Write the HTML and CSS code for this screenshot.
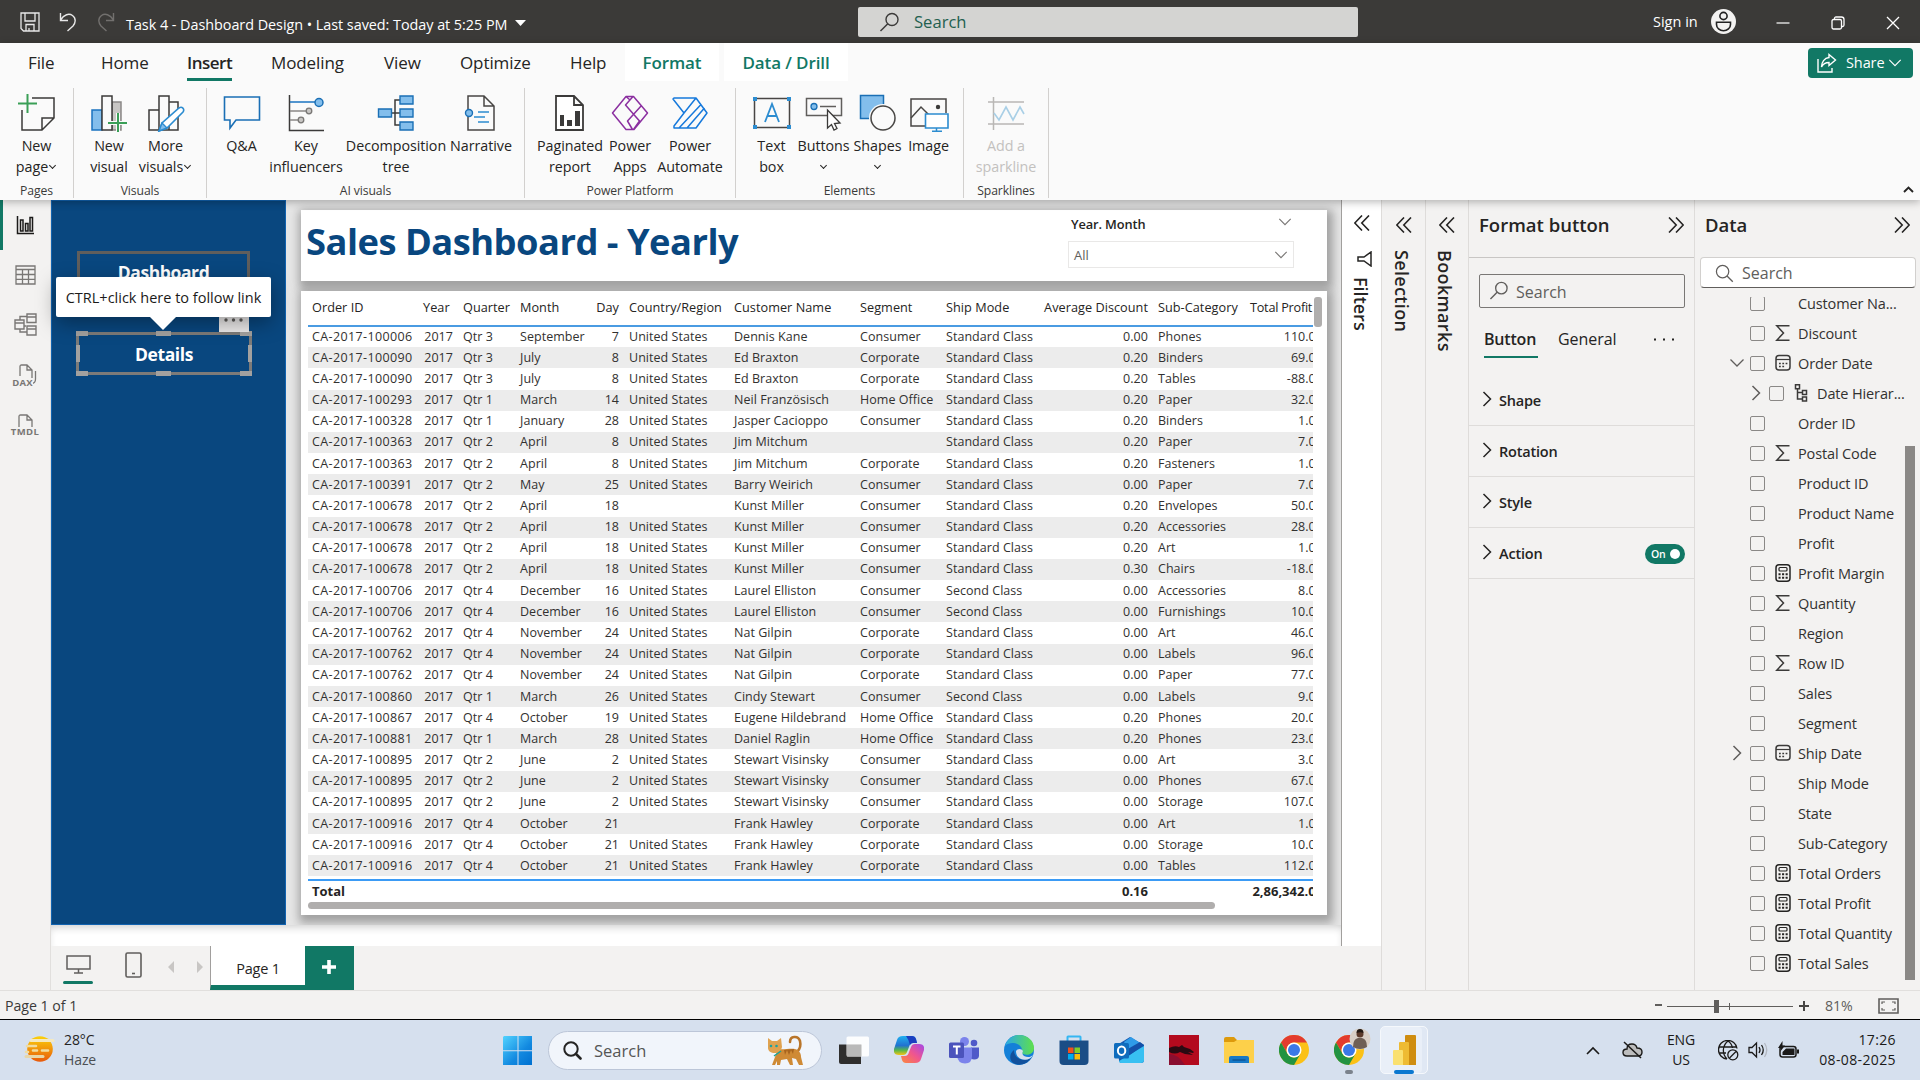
FILE: index.html
```html
<!DOCTYPE html>
<html lang="en">
<head>
<meta charset="utf-8">
<title>Task 4 - Dashboard Design</title>
<link rel="stylesheet" href="styles.css">
</head>
<body>
<svg class="defs" width="0" height="0">
  <symbol id="i-down" viewBox="0 0 16 16"><path d="M1.500 4.500 8 11l6.500-6.500" fill="none" stroke="currentColor" stroke-width="1.300"/></symbol>
  <symbol id="i-right" viewBox="0 0 10 16"><path d="M1.500 1 8.500 8l-7 7" fill="none" stroke="currentColor" stroke-width="1.500"/></symbol>
  <symbol id="i-dbl-left" viewBox="0 0 16 16"><path d="M8 .5.8 8 8 15.500M15 .5 7.800 8l7.200 7.500" fill="none" stroke="currentColor" stroke-width="1.600"/></symbol>
  <symbol id="i-dbl-right" viewBox="0 0 16 16"><path d="M8 .5 15.200 8 8 15.500M1 .5 8.200 8 1 15.500" fill="none" stroke="currentColor" stroke-width="1.600"/></symbol>
  <symbol id="i-lens" viewBox="0 0 20 20"><circle cx="12.500" cy="7.500" r="6" fill="none" stroke="currentColor" stroke-width="1.400"/><path d="m8.300 11.700-7.300 7.300" stroke="currentColor" stroke-width="1.500"/></symbol>
  <symbol id="i-lens-r" viewBox="0 0 20 20"><circle cx="8" cy="8" r="6.500" fill="none" stroke="currentColor" stroke-width="1.300"/><path d="m12.700 12.700 6 6" stroke="currentColor" stroke-width="1.400"/></symbol>
  <symbol id="i-sigma" viewBox="0 0 16 18"><path d="M14.500 1.800H1.800L8.500 9l-6.700 7.200h12.700" fill="none" stroke="#3b3a39" stroke-width="1.500"/></symbol>
  <symbol id="i-cal" viewBox="0 0 16 18"><rect x="1" y="1.500" width="14" height="14.500" rx="3" fill="none" stroke="#3b3a39" stroke-width="1.500"/><path d="M1 5.500h14" stroke="#3b3a39" stroke-width="1.200"/><path d="M4 9.500h9M4 12.500h6" stroke="#3b3a39" stroke-width="1.600" stroke-dasharray="1.800 1.500"/></symbol>
  <symbol id="i-calc" viewBox="0 0 16 18"><rect x="1" y=".8" width="14" height="16.400" rx="3" fill="none" stroke="#252423" stroke-width="1.500"/><rect x="4" y="3.500" width="8" height="3.500" rx="1" fill="none" stroke="#252423" stroke-width="1.200"/><path d="M3.500 10.300h10M3.500 13.800h10" stroke="#252423" stroke-width="2.100" stroke-dasharray="2.100 1.450"/></symbol>
  <symbol id="i-hier" viewBox="0 0 16 18"><path d="M1.500.8h4v4h-4zM8.500 6.500h4v4h-4zM8.500 13h4v4h-4zM3.500 4.800V15h5M3.500 8.500h5" fill="none" stroke="#3b3a39" stroke-width="1.500"/></symbol>
  <symbol id="i-chrome" viewBox="0 0 30 30"><circle cx="15" cy="15" r="15" fill="#fbc116"/><path d="M2 7.500A15 15 0 0 1 28 7.500H15A7.500 7.500 0 0 0 8.500 18.700z" fill="#e33b2e"/><path d="M2 7.500A15 15 0 0 0 15 30l6.500-11.200A7.500 7.500 0 0 1 8.500 18.700z" fill="#229342"/><circle cx="15" cy="15" r="7.500" fill="#fff"/><circle cx="15" cy="15" r="6" fill="#3b78e7"/></symbol>
</svg>

<header class="titlebar">
  <div class="quick">
    <svg width="20" height="20" viewBox="0 0 20 20" fill="none" stroke="#e8e8e8" stroke-width="1.300"><path d="M1 1h18v18H3.500L1 16.500zM5 1v8h10V1M6 19v-6.500h8V19M9 19v-3"/></svg>
    <svg width="18" height="20" viewBox="0 0 18 20" fill="none" stroke="#e8e8e8" stroke-width="1.400"><path d="M1.500 1v7.500H9M1.500 8C5 2.500 10 1 13.500 3.500c4 3 3 7.500.5 10.500l-5.500 5"/></svg>
    <svg width="18" height="20" viewBox="0 0 18 20" fill="none" stroke="#72706e" stroke-width="1.400"><path d="M16.500 1v7.500H9M16.500 8C13 2.500 8 1 4.500 3.500c-4 3-3 7.500-.5 10.500l5.500 5"/></svg>
  </div>
  <div class="doc-title">Task 4 - Dashboard Design • Last saved: Today at 5:25 PM</div>
  <svg class="doc-caret" width="11" height="6" viewBox="0 0 11 6"><path d="M0 0h11L5.500 6z" fill="#fff"/></svg>
  <div class="top-search"><svg width="21" height="20"><use href="#i-lens"/></svg><span>Search</span></div>
  <div class="account">
    <span>Sign in</span>
    <svg width="25" height="25" viewBox="0 0 25 25"><circle cx="12.500" cy="12.500" r="12.500" fill="#f3f2f1"/><circle cx="12.500" cy="7" r="3.600" fill="none" stroke="#222" stroke-width="1.600"/><path d="M5.500 13.200h14v2.300a7 6.300 0 0 1-14 0z" fill="none" stroke="#222" stroke-width="1.600"/></svg>
  </div>
  <div class="win">
    <svg width="14" height="14" viewBox="0 0 14 14"><path d="M.5 7h13" stroke="#fff" stroke-width="1.200"/></svg>
    <svg width="14" height="14" viewBox="0 0 14 14" fill="none" stroke="#fff" stroke-width="1.300"><rect x="1" y="3.500" width="9.500" height="9.500" rx="1.500"/><path d="M3.500 3.200V2.500c0-1 .6-1.500 1.500-1.500h5.500C12 1 13 2 13 3.500V9c0 1-.5 1.500-1.500 1.500h-.8"/></svg>
    <svg width="14" height="14" viewBox="0 0 14 14"><path d="m1 1 12 12M13 1 1 13" stroke="#fff" stroke-width="1.300"/></svg>
  </div>
</header>

<section class="ribbon">
  <nav class="tabs">
    <a class="t-file">File</a><a class="t-home">Home</a><a class="t-insert active">Insert</a><a class="t-model">Modeling</a><a class="t-view">View</a><a class="t-opt">Optimize</a><a class="t-help">Help</a><a class="ctx ctx-format">Format</a><a class="ctx ctx-data">Data / Drill</a>
    <div class="share">
      <svg width="20" height="20" viewBox="0 0 20 20" fill="none" stroke="#fff" stroke-width="1.400"><path d="M1 6v13h14v-4M12 1.500 18.500 7 12 12.500v-3C8 9.500 6 11 4.500 14 4.500 9 7.500 5 12 4.500z"/></svg>
      <span>Share</span><svg width="14" height="14"><use href="#i-down"/></svg>
    </div>
  </nav>
  <div class="groups">
    <div class="group g-pages">
      <div class="tools">
        <div class="tool w72"><svg width="38" height="38" viewBox="0 0 38 38" fill="none"><path d="M14 4h22v20L24 36H4V16M24 36V24h12" stroke="#3b3a39" stroke-width="1.500"/><path d="M9.500 0v19M0 9.500h19" stroke="#3a9f57" stroke-width="2"/></svg><b>New<br>page<i class="cv"></i></b></div>
      </div><span class="gname">Pages</span>
    </div>
    <div class="group g-visuals">
      <div class="tools">
        <div class="tool w56"><svg width="38" height="38" viewBox="0 0 38 38"><path d="M2 16h10v20H2z" fill="#83beec" stroke="#1a73c0" stroke-width="1.500"/><path d="M22 8h9v28h-9z" fill="#c8c6c4" stroke="#8a8886" stroke-width="1.500"/><path d="M12 2h10v34H12z" fill="#fafafa" stroke="#3b3a39" stroke-width="1.500"/><path d="M28 19v19M18 29h19" stroke="#fafafa" stroke-width="4"/><path d="M28 19v19M18 29h19" stroke="#3a9f57" stroke-width="2"/></svg><b>New<br>visual</b></div>
        <div class="tool w58"><svg width="38" height="38" viewBox="0 0 38 38"><path d="M2 16h10v20H2zM22 8h9v28h-9zM12 2h10v34H12z" fill="#fafafa" stroke="#3b3a39" stroke-width="1.500"/><path d="m12 37 3-8 17-15c3-2 6 1 4 4L20 34z" fill="#fff" stroke="#2c8cd0" stroke-width="1.600"/><path d="m12 37 3-8 5 5z" fill="#83beec" stroke="#2c8cd0" stroke-width="1.400"/></svg><b>More<br>visuals<i class="cv"></i></b></div>
      </div><span class="gname">Visuals</span>
    </div>
    <div class="group g-ai">
      <div class="tools">
        <div class="tool w56"><svg width="38" height="38" viewBox="0 0 38 38" fill="none"><path d="M1.500 3h35v23H13l-6 8v-8H1.500z" stroke="#1a6fb5" stroke-width="1.600"/></svg><b>Q&amp;A</b></div>
        <div class="tool w72"><svg width="38" height="38" viewBox="0 0 38 38"><path d="M2.500 1v35.500H37" fill="none" stroke="#3b3a39" stroke-width="1.500"/><path d="M3 8h26" stroke="#1a73c0" stroke-width="1.500"/><path d="M3 17h16M3 26h8" stroke="#8a8886" stroke-width="1.500"/><circle cx="32" cy="8.500" r="4" fill="#83beec" stroke="#1a6fb5" stroke-width="1.500"/><circle cx="22" cy="17" r="2.800" fill="#c8c6c4" stroke="#797775" stroke-width="1.300"/><circle cx="14" cy="26" r="2.800" fill="#c8c6c4" stroke="#797775" stroke-width="1.300"/></svg><b>Key<br>influencers</b></div>
        <div class="tool w108"><svg width="38" height="38" viewBox="0 0 38 38"><path d="M14 19h9M23 6h-5v25h5" fill="none" stroke="#3b3a39" stroke-width="1.500"/><path d="M1.500 15h13v8h-13zM23 2h13v8H23zM23 15h13v8H23zM23 28h13v8H23z" fill="#83beec" stroke="#1a6fb5" stroke-width="1.400"/></svg><b>Decomposition<br>tree</b></div>
        <div class="tool w62"><svg width="38" height="38" viewBox="0 0 38 38" fill="none"><path d="M6 16V2h16l10 10v24H6V23M22 2v10h10" stroke="#484644" stroke-width="1.500"/><circle cx="7" cy="19" r="3.500" fill="#83beec" stroke="#1a6fb5" stroke-width="1.400"/><path d="M16 18h11M12 23h11M16 28h11" stroke="#2c8cd0" stroke-width="1.400"/></svg><b>Narrative</b></div>
      </div><span class="gname">AI visuals</span>
    </div>
    <div class="group g-power">
      <div class="tools">
        <div class="tool w66"><svg width="38" height="38" viewBox="0 0 38 38"><path d="M5 2h18l9 9v25H5zM23 2v9h9" fill="#fff" stroke="#3b3a39" stroke-width="1.800"/><path d="M9 21h4v11H9zM16 26h5v6h-5zM24 17h5v15h-5z" fill="#3b3a39"/></svg><b>Paginated<br>report</b></div>
        <div class="tool w54"><svg width="38" height="38" viewBox="0 0 38 38" fill="none" stroke="#8b2fa0" stroke-width="1.500" stroke-linejoin="round"><path d="M15 2.500h7.500L36.500 19 23 35.500h-8L1.500 19zM22 2.500 14.500 11l14 16-6 8.500M30.500 11.500l-14 15.500 5 8.500M15 2.500l4 3.500"/></svg><b>Power<br>Apps</b></div>
        <div class="tool w66"><svg width="38" height="38" viewBox="0 0 38 38" fill="none" stroke="#1679dc" stroke-width="1.500" stroke-linejoin="round"><path d="M3 4h22l11 15-11 15H3l0-2 10-13L2 5zM13 19 25 4M8 34 30 10.500M16 34 33.500 14"/></svg><b>Power<br>Automate</b></div>
      </div><span class="gname">Power Platform</span>
    </div>
    <div class="group g-elem">
      <div class="tools">
        <div class="tool w51"><svg width="40" height="38" viewBox="0 0 40 38"><path d="M2.500 4.500h35v29h-35z" fill="none" stroke="#484644" stroke-width="1.500"/><path d="M1 3h4v4H1zM35 3h4v4h-4zM1 31h4v4H1zM35 31h4v4h-4z" fill="#2c8cd0"/><path d="m13 28 7-18 7 18M15.500 22h9" fill="none" stroke="#2c8cd0" stroke-width="1.800"/></svg><b>Text<br>box</b></div>
        <div class="tool w54"><svg width="38" height="38" viewBox="0 0 38 38"><path d="M1.500 4.500h35v17h-35z" fill="none" stroke="#605e5c" stroke-width="1.500"/><circle cx="9" cy="12.500" r="3" fill="#83beec" stroke="#1a6fb5" stroke-width="1.300"/><path d="M15 12.500h16" stroke="#605e5c" stroke-width="1.500"/><path d="m22.500 16 12.500 13-5.500.5 2.500 5-3 1.500-2.500-5.500-4 3.500z" fill="#fff" stroke="#3b3a39" stroke-width="1.300"/></svg><b>Buttons<br><i class="cv"></i></b></div>
        <div class="tool w54"><svg width="38" height="38" viewBox="0 0 38 38"><path d="M1.500 1.500h23v23h-23z" fill="#83beec" stroke="#1a6fb5" stroke-width="1.500"/><circle cx="24" cy="24" r="14" fill="#fafafa"/><circle cx="24" cy="24" r="12" fill="#fafafa" stroke="#484644" stroke-width="1.500"/></svg><b>Shapes<br><i class="cv"></i></b></div>
        <div class="tool w50"><svg width="40" height="38" viewBox="0 0 40 38" fill="none"><path d="M16 32H2V5h35v14" stroke="#484644" stroke-width="1.500"/><path d="m2 24 10-11 8 8" stroke="#484644" stroke-width="1.500"/><circle cx="29" cy="13" r="2.200" fill="#3b3a39"/><path d="M16.500 20h22.500v14H16.500z" fill="#fff" stroke="#2c8cd0" stroke-width="1.600"/><path d="M27.500 34v3M23 37.300h10" stroke="#2c8cd0" stroke-width="1.500"/></svg><b>Image</b></div>
      </div><span class="gname">Elements</span>
    </div>
    <div class="group g-spark">
      <div class="tools">
        <div class="tool off"><svg width="38" height="38" viewBox="0 0 38 38" fill="none"><path d="M1 8h36M1 30h36M6.500 3v33" stroke="#b9b7b5" stroke-width="1.500"/><path d="m7 19 5 7 7-13 7 13 7-13 4 7" stroke="#a9cfe6" stroke-width="1.600"/></svg><b>Add a<br>sparkline</b></div>
      </div><span class="gname">Sparklines</span>
    </div>
    <svg class="collapse" width="11" height="7" viewBox="0 0 11 7"><path d="m1 6 4.500-4.500L10 6" fill="none" stroke="#252423" stroke-width="1.900"/></svg>
  </div>
</section>

<main class="work">
  <aside class="rail">
    <div class="rail-item on"><svg width="19" height="19" viewBox="0 0 19 19" fill="none" stroke="#1b1a19" stroke-width="1.500"><path d="M1.500 0v17.500H18M4.500 4h2.500v11H4.500zM9.500 7.500H12V15H9.500zM14 1.500h2.500V15H14z"/></svg></div>
    <div class="rail-item"><svg width="21" height="20" viewBox="0 0 21 20" fill="none" stroke="#797775" stroke-width="1.300"><path d="M1 1h19v18H1zM1 4.500h19M1 9.500h19M1 14.300h19M7.500 4.500V19M13.500 4.500V19"/></svg></div>
    <div class="rail-item"><svg width="23" height="23" viewBox="0 0 23 23" fill="none" stroke="#797775" stroke-width="1.400"><path d="M1 7h9v9H1zM1 10h9M13 1h9v8.500h-9zM13 4h9M13 13h9v9h-9zM13 16h9M6 7V3.500h7M10 13h2M6 16v3h7"/></svg></div>
    <div class="rail-item doc"><svg width="23" height="21" viewBox="0 0 23 21" fill="none" stroke="#797775" stroke-width="1.300"><path d="M6 12V2.500C6 1.500 6.500 1 7.500 1H13l5 5v9c0 2-1 2.500-2 2.500M13 1v5h5M21.500 7v8c0 3-1.500 4.500-4 4.500"/></svg><em>DAX</em></div>
    <div class="rail-item doc tmdl"><svg width="23" height="13" viewBox="0 0 23 13" fill="none" stroke="#797775" stroke-width="1.300"><path d="M5 13V2.500C5 1.500 5.500 1 6.500 1H13l5 5v7M13 1v5h5"/></svg><em>TMDL</em></div>
  </aside>

  <div class="center">
    <div class="canvas">
      <div class="navy">
        <div class="nav-btn">Dashboard</div>
        <div class="nav-btn selected">Details
          <span class="h tl"></span><span class="h tc"></span><span class="h tr"></span><span class="h ml"></span><span class="h mr"></span><span class="h bl"></span><span class="h bc"></span><span class="h br"></span>
        </div>
        <div class="more"><svg width="20" height="4" viewBox="0 0 20 4" fill="#605e5c"><circle cx="2" cy="2" r="1.700"/><circle cx="9.500" cy="2" r="1.700"/><circle cx="17" cy="2" r="1.700"/></svg></div>
        <div class="tip">CTRL+click here to follow link</div>
      </div>
      <div class="report">
        <div class="card head">
          <h1>Sales Dashboard - Yearly</h1>
          <div class="slicer">
            <div class="slicer-top"><span>Year. Month</span><svg width="14" height="14"><use href="#i-down"/></svg></div>
            <div class="slicer-box"><span>All</span><svg width="14" height="14"><use href="#i-down"/></svg></div>
          </div>
        </div>
        <div class="card grid-card">
          <div class="tbl-clip"><table class="tbl">
            <colgroup><col class="c1"><col class="c2"><col class="c3"><col class="c4"><col class="c5"><col class="c6"><col class="c7"><col class="c8"><col class="c9"><col class="c10"><col class="c11"><col class="c12"></colgroup>
            <thead><tr><th>Order ID</th><th>Year</th><th>Quarter</th><th>Month</th><th class="n">Day</th><th>Country/Region</th><th>Customer Name</th><th>Segment</th><th>Ship Mode</th><th class="n">Average Discount</th><th>Sub-Category</th><th>Total Profit</th></tr></thead>
            <tbody id="rows"></tbody>
          </table>
          <div class="total"><span class="tot-l">Total</span><span class="tot-d">0.16</span><span class="tot-p">2,86,342.00</span></div>
          </div>
          <div class="vbar"></div>
          <div class="hbar"></div>
        </div>
      </div>
    </div>
    <div class="under"></div>
    <footer class="pages">
      <div class="view on"><svg width="25" height="19" viewBox="0 0 25 19" fill="none" stroke="#605e5c" stroke-width="1.500"><path d="M1 1h23v13H1zM12.500 14v4M8 18h9"/></svg></div>
      <div class="view phone"><svg width="17" height="26" viewBox="0 0 17 26" fill="none" stroke="#605e5c" stroke-width="1.600"><rect x="1" y="1" width="15" height="24" rx="1.500"/><path d="M7 21.500h3"/></svg></div>
      <svg class="arr" width="35" height="12" viewBox="0 0 35 12" fill="#c8c6c4"><path d="M6 0v12L0 6zM29 0v12l6-6z"/></svg>
      <div class="page-tab">Page 1</div>
      <div class="add"><svg width="14" height="14" viewBox="0 0 14 14"><path d="M7 0v14M0 7h14" stroke="#fff" stroke-width="3.600"/></svg></div>
    </footer>
  </div>

  <div class="strip filters"><svg width="16" height="16"><use href="#i-dbl-left"/></svg>
    <svg class="funnel" width="15" height="16" viewBox="0 0 15 16" fill="none" stroke="#252423" stroke-width="1.500"><path d="M14 1v14L7 10H1V6h6z"/></svg><span>Filters</span></div>
  <div class="strip"><svg width="16" height="16"><use href="#i-dbl-left"/></svg><span>Selection</span></div>
  <div class="strip marks"><svg width="16" height="16"><use href="#i-dbl-left"/></svg><span>Bookmarks</span></div>

  <section class="pane format">
    <div class="pane-head"><h2>Format button</h2><svg width="16" height="16"><use href="#i-dbl-right"/></svg></div>
    <div class="fsearch"><svg width="20" height="19"><use href="#i-lens"/></svg><span>Search</span></div>
    <div class="ftabs"><span class="on">Button</span><span>General</span><svg width="20" height="3" viewBox="0 0 20 3" fill="#252423"><path d="M0 .5h2v2H0zM9 .5h2v2H9zM18 .5h2v2h-2z"/></svg></div>
    <div class="fitem"><svg width="10" height="16"><use href="#i-right"/></svg><span>Shape</span></div>
    <div class="fitem"><svg width="10" height="16"><use href="#i-right"/></svg><span>Rotation</span></div>
    <div class="fitem"><svg width="10" height="16"><use href="#i-right"/></svg><span>Style</span></div>
    <div class="fitem"><svg width="10" height="16"><use href="#i-right"/></svg><span>Action</span><div class="toggle">On<i></i></div></div>
  </section>

  <section class="pane data">
    <div class="pane-head"><h2>Data</h2><svg width="16" height="16"><use href="#i-dbl-right"/></svg></div>
    <div class="dsearch"><svg width="19" height="19"><use href="#i-lens-r"/></svg><span>Search</span></div>
    <div class="fields" id="fields"></div>
    <div class="dbar"></div>
  </section>
</main>

<div class="status">
  <span>Page 1 of 1</span>
  <div class="zoom">
    <svg width="154" height="16" viewBox="0 0 154 16"><path d="M0 7h7" stroke="#605e5c" stroke-width="2"/><path d="M12 8.500h126M74.500 5v7" stroke="#605e5c"/><path d="M59 2h5v13h-5z" fill="#605e5c"/><path d="M144 8h10M149 3v10" stroke="#484644" stroke-width="2"/></svg>
    <span>81%</span>
    <svg class="fit" width="21" height="16" viewBox="0 0 21 16" fill="none" stroke="#605e5c" stroke-width="1.600"><path d="M1 1h19v14H1z"/><path d="M4 6V4h3M14 4h3v2M17 10v2h-3M7 12H4v-2" stroke-width="1.200"/></svg>
  </div>
</div>

<div class="taskbar">
  <div class="weather">
    <svg width="31" height="28" viewBox="0 0 31 28"><defs><linearGradient id="sun" x1="0" y1="0" x2="0" y2="1"><stop offset="0" stop-color="#fbd20b"/><stop offset="1" stop-color="#e8590c"/></linearGradient></defs><circle cx="16" cy="14" r="12.800" fill="url(#sun)"/><path d="M7 5.500h11M17 5.500h12" stroke="#f5e9c0" stroke-width="3" stroke-linecap="round"/><path d="M3 11h9M18 15.500h6M9 15.500h4M2 17h2" stroke="#f0dca0" stroke-width="2.600" stroke-linecap="round"/><path d="M2 21.500h17" stroke="#e8d6a8" stroke-width="3" stroke-linecap="round"/></svg>
    <div>28°C<br><small>Haze</small></div>
  </div>
  <div class="apps">
    <svg class="start" width="30" height="30" viewBox="0 0 30 30"><defs><linearGradient id="w" x1="0" y1="0" x2="1" y2="1"><stop offset="0" stop-color="#52d3ff"/><stop offset=".6" stop-color="#1289e0"/><stop offset="1" stop-color="#0070d0"/></linearGradient></defs><path d="M1 0h13.500v14.300H0V1zM15.500 0H29v14.300H15.500zM0 15.300h14.500V29H0zM15.500 15.300H29V29H15.500z" fill="url(#w)"/></svg>
    <div class="tsearch"><svg width="19" height="19" viewBox="0 0 19 19"><circle cx="8" cy="8" r="6.700" fill="none" stroke="#252423" stroke-width="2"/><path d="m13 13 4.500 4.500" stroke="#252423" stroke-width="2.600" stroke-linecap="round"/></svg><span>Search</span>
      <svg class="cat" width="38" height="32" viewBox="0 0 38 32"><path d="M31 17c3-3 4-7 3-11-2-6-10-5-10 1" fill="none" stroke="#b9752a" stroke-width="2.600" stroke-linecap="round"/><path d="M12 14c6 1 12-1 17 0 4 1 6 4 6 8l2 8h-4l-3-6-4-1 1 7h-3l-3-6-6 1-1 5h-3v-4l-2 4H6l3-8z" fill="#cf8a35"/><path d="m18 15 1 5 2-5 2 5 2-5 2 4 1-5z" fill="#a8641e"/><path d="m2 3 4 3h5l4-3 1 9c-1 4-4 6-7 6-4 0-7-2-7-5z" fill="#e0a250"/><circle cx="5" cy="11" r="1.300" fill="#1aa3a3"/><circle cx="10.500" cy="11" r="1.300" fill="#1aa3a3"/><path d="m8 21 7-5" stroke="#17a398" stroke-width="1.500"/></svg>
    </div>
    <svg class="app" width="30" height="30" viewBox="0 0 30 30"><path d="M0 9.500h22V29H2q-2 0-2-2z" fill="#2f2e2d"/><rect x="7.500" y="1.500" width="22.500" height="20" rx="1.500" fill="#fff" opacity=".92"/><path d="M8 9.500h14.500v12H8z" fill="#b9b9b9"/></svg>
    <svg class="app" width="30" height="30" viewBox="0 0 30 30"><defs><linearGradient id="cp1" x1="0" y1="0" x2="0" y2="1"><stop offset="0" stop-color="#1fb0f0"/><stop offset=".5" stop-color="#2272d0"/><stop offset=".75" stop-color="#57b84a"/><stop offset="1" stop-color="#f5c414"/></linearGradient><linearGradient id="cp2" x1="1" y1="0" x2="0" y2="1"><stop offset="0" stop-color="#a348e8"/><stop offset=".5" stop-color="#f0568e"/><stop offset="1" stop-color="#fb8a3c"/></linearGradient></defs><path d="M9 1h9q3 0 4 3l1 4h-4q-3 0-4 4l-2 5q-1 3-4 3H5q-6 0-5-6l3-9q1-4 6-4z" fill="url(#cp1)"/><path d="M16 1h2q3 0 4 3l1 4h-4q-2 0-3 2-1-5-4-9z" fill="#1b3fc0"/><path d="M21 28h-9q-3 0-4-3l-1-4h4q3 0 4-4l2-5q1-3 4-3h4q6 0 5 6l-3 9q-1 4-6 4z" fill="url(#cp2)"/></svg>
    <svg class="app" width="30" height="30" viewBox="0 0 30 30"><circle cx="15.500" cy="6.500" r="4.500" fill="#7b83eb"/><circle cx="25" cy="8" r="3.300" fill="#5059c9"/><path d="M22 12.500h8v8q0 4-5 4-3 0-4-2z" fill="#5059c9"/><path d="M8 12.500h15V21q0 7.500-7 7.500T8 21z" fill="#7b83eb"/><rect y="7.500" width="15" height="15.500" rx="1.500" fill="#4b53bc"/><path d="M4 11.500h7.500M7.800 11.500v8" stroke="#fff" stroke-width="2"/></svg>
    <svg class="app" width="30" height="30" viewBox="0 0 30 30"><defs><linearGradient id="e1" x1="0" x2="1"><stop offset="0" stop-color="#2aa8e8"/><stop offset="1" stop-color="#5fe04a"/></linearGradient></defs><circle cx="15" cy="15" r="15" fill="#1480d8"/><path d="M1 11C3 4 9 0 15 0c9 0 15 6 15 13 0 6-6 8-11 6-2-1-1-2-1-4 0-6-11-10-17-4z" fill="url(#e1)"/><path d="M10 15c0 9 9 12 17 8-5 8-14 8-19 4-3-4-2-9 2-12z" fill="#12519c"/><path d="M12 16a4 4 0 0 1 7 0c-1 2-1 3 1 5 4 2 7 1 9-1-2 4-7 6-12 4-4-2-5-5-5-8z" fill="#d6e0ee"/></svg>
    <svg class="app" width="30" height="30" viewBox="0 0 30 30"><path d="M8.500 6V2q0-.5.500-.5h12q.5 0 .5.500v4" fill="none" stroke="#35b6f2" stroke-width="2"/><path d="M.5 5.500h29V26q0 4-4 4h-21q-4 0-4-4z" fill="#1a4d86"/><path d="M9 12.500h5.500V18H9z" fill="#f1511b"/><path d="M15.500 12.500H21V18h-5.500z" fill="#80cc28"/><path d="M9 19h5.500v5.500H9z" fill="#00adef"/><path d="M15.500 19H21v5.500h-5.500z" fill="#fbbc09"/></svg>
    <svg class="app" width="30" height="30" viewBox="0 0 30 30"><path d="m3 10 13-8 14 8v15q0 3-3 3H8q-3 0-3-3z" fill="#1459b0"/><path d="M10 7 17 2l9 6-11 8z" fill="#2f9be8"/><path d="m5 26 25-15v14q0 3-3 3H8q-3 0-3-2z" fill="#38c0f2"/><path d="m12 15 14-8 4 3-17 12z" fill="#1450a8"/><rect y="8" width="15" height="15.500" rx="1.500" fill="#0f6cbd"/><ellipse cx="7.600" cy="15.700" rx="3.700" ry="4.200" fill="none" stroke="#fff" stroke-width="2"/></svg>
    <svg class="app" width="30" height="30" viewBox="0 0 30 30"><path d="M0 0h30v30H0z" fill="#b30a1e"/><path d="M0 13q6-3 10-1l3-2 2 2 6 2 4 3-1 1-5-1 5 3-8-1-5-2q-5 3-11 0z" fill="#2a0a12"/><path d="M0 19q9 0 16 11H0z" fill="#8a0f30"/></svg>
    <svg class="app" width="30" height="30" viewBox="0 0 30 30"><path d="M0 4q0-2 2-2h8l3 3h17v8H0z" fill="#dd9a0c"/><path d="M0 7h10l3-2h17v23H0z" fill="#fdd04a"/><path d="M5 28v-5q0-2 2-2h16q2 0 2 2v5z" fill="#1779c6"/><path d="M8.500 25h13" stroke="#0c4f8e" stroke-width="1.300"/></svg>
    <svg class="app" width="30" height="30"><use href="#i-chrome"/></svg>
    <div class="app running"><svg width="30" height="30"><use href="#i-chrome"/></svg><svg class="avatar" width="22" height="22" viewBox="0 0 22 22"><circle cx="11" cy="11" r="10.500" fill="#d9cfc6"/><path d="M4 19q0-8 5-9h4q5 1 5 9-7 4-14 0z" fill="#6f5f55"/><circle cx="11" cy="6" r="3.500" fill="#5c3a2a"/><path d="M7.500 5q0-4 3.500-4t3.500 4q-3-1.500-7 0z" fill="#221812"/></svg></div>
    <div class="app current"><svg width="23" height="30" viewBox="0 0 23 30"><path d="M12 1q0-1 1-1h9q1 0 1 1v29H12z" fill="#cf8d10"/><path d="M6 8q0-1 1-1h8q1 0 1 1v22H6z" fill="#eebb33"/><path d="M0 16q0-1 1-1h8q1 0 1 1v14H1q-1 0-1-1z" fill="#fae070"/></svg></div>
  </div>
  <div class="tray">
    <svg width="14" height="9" viewBox="0 0 14 9"><path d="m1 8 6-6 6 6" fill="none" stroke="#1b1a19" stroke-width="1.600"/></svg>
    <svg class="cloud" width="21" height="18" viewBox="0 0 21 18"><path d="M5 15q-4 0-4-3.500T5 8q0-5 5-5 4 0 5 4 5 0 5 4t-4 4z" fill="#bdbdbd" stroke="#1b1a19" stroke-width="1.400"/><path d="m2 1 17 16" stroke="#1b1a19" stroke-width="1.500"/></svg>
    <div class="lang">ENG<br>US</div>
    <svg class="globe" width="21" height="21" viewBox="0 0 21 21" fill="none" stroke="#1b1a19" stroke-width="1.300"><path d="M19 8.500A9.300 9.300 0 1 0 9 19M10 1C4 6 4 14 9 19M10 1c3 2 4 4 4.500 7M1.500 7h17M1.500 13H8"/><circle cx="14.800" cy="14.800" r="5"/><path d="m11.500 18 6.500-6.500"/></svg>
    <svg class="spk" width="20" height="18" viewBox="0 0 20 18" fill="none" stroke="#1b1a19" stroke-width="1.300"><path d="M1 6.500h3L8.500 2v14L4 11.500H1zM11 6q2 3 0 6M13.500 4q3.500 5 0 10"/><path d="M16.500 2q4.500 7 0 14" stroke="#b4b9c2"/></svg>
    <svg class="bat" width="21" height="18" viewBox="0 0 21 18"><rect x="2" y="5.500" width="16" height="10.500" rx="2.500" fill="none" stroke="#1b1a19" stroke-width="1.500"/><path d="M8 7.500h8.500v6.500H4.500v-3zM19 8.500h2v4h-2zM4.500 0 0 7h3l-1 4 5-6.500H4.500z" fill="#1b1a19"/></svg>
    <div class="clock">17:26<br>08-08-2025</div>
  </div>
</div>
<script src="script.js"></script>
</body>
</html>
```
FILE: styles.css
```css
* { box-sizing: border-box; }
html, body { height: 100%; }
body {
  margin: 0;
  width: 1920px;
  height: 1080px;
  overflow: hidden;
  display: flex;
  flex-direction: column;
  font-family: "Open Sans", "Noto Sans", sans-serif;
  font-size: 14px;
  color: #252423;
  background: #f3f2f1;
}
.defs { position: absolute; }
svg { flex: none; display: block; }
h1, h2 { margin: 0; }

/* Title bar */
.titlebar { height: 43px; flex: none; background: #3b3a38; color: #fff; display: flex; align-items: center; }
.quick { display: flex; gap: 19px; padding-left: 20px; width: 126px; }
.quick svg + svg + svg { margin-left: 1px; }
.doc-title { font-size: 14.400px; white-space: nowrap; width: 382px; padding-top: 5px; letter-spacing: -.04px; }
.doc-caret { margin-left: 7px; margin-top: 2px; }
.top-search { margin-left: 332px; width: 500px; height: 30px; border-radius: 2px; background: #d4d4d2; display: flex; align-items: center; padding-left: 21px; color: #23604f; font-size: 16.600px; }
.top-search svg { color: #3b3a39; margin-right: 14px; }
.account { margin-left: 295px; display: flex; align-items: center; gap: 12px; font-size: 14.500px; }
.account span { width: 46px; white-space: nowrap; }
.win { display: flex; gap: 41px; margin-left: 40px; padding-top: 2px; }

/* Ribbon */
.ribbon { height: 157px; flex: none; background: #fafafa; display: flex; flex-direction: column; box-shadow: 0 2px 8px rgba(0,0,0,.28); position: relative; z-index: 3; }
.tabs { height: 38px; display: flex; padding-left: 28px; font-size: 17px; line-height: 40px; color: #252423; }
.tabs a { white-space: nowrap; letter-spacing: -.1px; }
.t-file { width: 73px; } .t-home { width: 86px; }
.t-insert { width: 45px; margin-right: 39px; }
.t-model { width: 113px; } .t-view { width: 76px; } .t-opt { width: 110px; } .t-help { width: 55px; }
.tabs .active { font-weight: 600; border-bottom: 3px solid #117865; letter-spacing: -.5px; }
.ctx { background: #fff; color: #117865; font-weight: 600; text-align: center; }
.ctx-format { width: 94px; margin-right: 5px; }
.ctx-data { width: 124px; }
.share { margin: 5px 7px 0 auto; width: 105px; height: 30px; border-radius: 4px; background: #117865; color: #fff; display: flex; align-items: center; padding-left: 9px; font-size: 14.500px; line-height: 30px; }
.share span { width: 38px; margin: 0 4px 0 9px; letter-spacing: -.1px; }
.groups { flex: 1; display: flex; padding: 7px 0 2px; }
.group { display: flex; flex-direction: column; border-right: 1px solid #d2d0ce; height: 110px; align-items: center; }
.g-pages { width: 74px; } .g-visuals { width: 133px; } .g-ai { width: 318px; } .g-power { width: 211px; } .g-elem { width: 228px; } .g-spark { width: 85px; }
.tools { display: flex; flex: none; padding-top: 6px; height: 94px; }
.tool { display: flex; flex-direction: column; align-items: center; gap: 4px; }
.tool b { font-weight: 400; font-size: 14.300px; line-height: 20.500px; text-align: center; white-space: nowrap; letter-spacing: -.05px; }
.off b { color: #c3c1bf; }
.cv { display: inline-block; width: 5px; height: 5px; border: solid #252423; border-width: 0 1.700px 1.700px 0; transform: rotate(45deg); margin: 0 2px 4px 4px; }
.tool b br + .cv { margin-left: 2px; }
.w50 { width: 48px; } .w51 { width: 50px; } .w54 { width: 54px; } .w56 { width: 57px; } .w58 { width: 56px; } .w62 { width: 62px; } .w66 { width: 66px; } .w72 { width: 72px; } .w108 { width: 108px; }
.g-visuals .tools { margin-right: 6px; }
.g-ai { align-items: stretch; text-align: center; }
.g-ai .tools { padding-left: 6px; }
.gname { flex: none; font-size: 12.200px; line-height: 18px; letter-spacing: -.1px; color: #3b3a39; }
.collapse { margin: 98px 6px 0 auto; }

/* Work area */
.work { flex: 1; display: flex; min-height: 0; border-bottom: 1px solid #e1dfdd; }
.rail { width: 51px; border-right: 1px solid #e1dfdd; background: #f3f2f1; display: flex; flex-direction: column; }
.rail-item { height: 50px; display: flex; align-items: center; justify-content: center; flex-direction: column; padding-bottom: 1px; }
.rail-item.on { border-left: 3px solid #117865; padding: 0 2px 0 0; }
.rail-item.doc { padding-bottom: 0; }
.doc em { font: 700 9.500px "Open Sans", sans-serif; color: #797775; margin: -7px 0 0 -5px; letter-spacing: .2px; background: #f3f2f1; line-height: 9px; }
.tmdl em { margin: 0; letter-spacing: .4px; }
.center { width: 1290px; display: flex; flex-direction: column; position: relative; }
.canvas { height: 725px; flex: none; display: flex; background: #e6e6e6; }
.navy { width: 235px; background: #09477f; border: 1px solid #1163b0; position: relative; display: flex; flex-direction: column; padding: 50px 0 0 24px; gap: 38px; }
.nav-btn { width: 173px; height: 43px; margin-left: 1px; border: 3px solid #605e5c; color: #fff; font-weight: 700; font-size: 17.500px; letter-spacing: -.4px; line-height: 37px; text-align: center; position: relative; }
.selected { width: 176px; margin-left: 0; border-color: #7d7b79; line-height: 38px; }
.h { position: absolute; background: #a3a19f; }
.tl, .tc, .tr { top: -4px; height: 5px; width: 12px; } .bl, .bc, .br { bottom: -4px; height: 5px; width: 12px; }
.tl, .bl { left: -3px; } .tr, .br { right: -3px; } .tc, .bc { left: 77px; width: 15px; }
.ml, .mr { top: 10px; height: 17px; width: 4px; } .ml { left: -3px; } .mr { right: -3px; }
.more { position: absolute; left: 167px; top: 106px; width: 30px; height: 25px; background: #eceaea; display: flex; align-items: center; justify-content: center; }
.tip { position: absolute; left: 4px; top: 76px; width: 215px; height: 40px; border-radius: 2px; background: #fff; color: #1b1a19; font-size: 14.500px; line-height: 41px; text-align: center; white-space: nowrap; box-shadow: 0 6px 20px rgba(0,0,0,.35); }
.tip::after { content: ""; position: absolute; left: 94px; top: 40px; border: 13px solid transparent; border-top-color: #fff; border-bottom: 0; }
.report { flex: 1; overflow: hidden; padding: 10px 0 0 15px; display: flex; flex-direction: column; gap: 10px; }
.card { width: 1026px; background: #fff; box-shadow: 2px 4px 9px 4px rgba(0,0,0,.3); }
.head { height: 71px; display: flex; justify-content: space-between; }
h1 { font-size: 36.300px; line-height: 62px; padding-left: 5px; color: #09477f; letter-spacing: -.5px; white-space: nowrap; }
.slicer { width: 226px; margin-right: 33px; }
.slicer svg { color: #797775; }
.slicer-top { display: flex; justify-content: space-between; padding: 5px 2px 0 3px; height: 31px; font-weight: 600; font-size: 12.800px; line-height: 19px; letter-spacing: -.1px; }
.slicer-box { height: 27px; border: 1px solid #e9e8e7; display: flex; justify-content: space-between; align-items: center; padding: 0 5px; font-size: 13px; color: #605e5c; }
.grid-card { height: 624px; position: relative; padding: 0 0 0 7px; z-index: 1; }
.tbl-clip { width: 1005px; height: 611px; overflow: hidden; }
.tbl { border-collapse: collapse; table-layout: fixed; width: 1020px; font-size: 12.500px; letter-spacing: .04px; color: #323130; }
.c1 { width: 110px; } .c2 { width: 40px; } .c3 { width: 57px; } .c4 { width: 76px; } .c5 { width: 33px; } .c6 { width: 105px; } .c7 { width: 126px; } .c8 { width: 86px; } .c9 { width: 97px; } .c10 { width: 115px; } .c11 { width: 93px; } .c12 { width: 82px; }
.tbl th { font-weight: 400; font-size: 12.700px; text-align: left; height: 35px; padding: 0 5px 2px; border-bottom: 2px solid #4a9be2; white-space: nowrap; color: #252423; }
.tbl th:last-child { letter-spacing: -.25px; padding-left: 4px; }
.tbl td { height: 21.180px; line-height: 18px; padding: 0 5px; white-space: nowrap; overflow: hidden; }
.tbl td:first-child { letter-spacing: .38px; }
.tbl th:first-child, .tbl td:first-child { padding-left: 4px; }
.tbl tr:nth-child(even) td { background: #ececec; }
.tbl .n { text-align: right; }
.total { margin-top: 3px; width: 1020px; border-top: 2px solid #3b9bf5; height: 22px; display: flex; font-weight: 700; font-size: 13px; line-height: 21px; padding: 0 5px 0 4px; }
.tot-l { width: 600px; } .tot-d { width: 236px; text-align: right; } .tot-p { flex: 1; text-align: right; }
.vbar { position: absolute; left: 1013px; top: 6px; width: 8px; height: 30px; border-radius: 3px; background: #b0aead; }
.hbar { width: 907px; height: 7px; border-radius: 4px; background: #b0aead; }
.under { height: 21px; flex: none; background: #fff; box-shadow: inset 0 5px 8px -3px rgba(0,0,0,.2); }
.pages { height: 44px; flex: none; background: #f3f2f1; display: flex; z-index: 2; width: 1329px; }
.view { width: 30px; margin-left: 12px; padding-top: 9px; display: flex; flex-direction: column; align-items: center; }
.view.on::after { content: ""; width: 30px; height: 3px; background: #117865; border-radius: 2px; margin-top: 7px; }
.phone { padding-top: 6px; margin-left: 25px; }
.arr { margin: 15px 7px 0 20px; }
.page-tab { width: 95px; height: 44px; background: #fff; border-left: 1px solid #a19f9d; border-bottom: 5px solid #117865; text-align: center; font-size: 14.500px; line-height: 45px; letter-spacing: -.2px; font-weight: 500; }
.add { width: 49px; height: 44px; background: #117865; padding: 14px 0 0 17px; }

/* Collapsed panes */
.strip { width: 44px; flex: none; border-left: 1px solid #dedcda; padding: 17px 0 0 14px; font-weight: 600; font-size: 18px; }
.strip svg { color: #252423; }
.strip span { writing-mode: vertical-rl; display: block; line-height: 22px; margin: 17px 0 0 -5px; letter-spacing: .35px; }
.strip.marks { width: 43px; padding-left: 13px; }
.strip.filters { width: 40px; background: #fff; border-left: 1px solid #a19f9d; padding: 15px 0 0 12px; height: 746px; }
.filters .funnel { margin: 20px 0 0 3px; }
.strip.filters span { margin: 10px 0 0 -4px; letter-spacing: 0; }

/* Panes */
.pane { border-left: 1px solid #dedcda; width: 226px; flex: none; display: flex; flex-direction: column; }
.pane-head { height: 57px; display: flex; justify-content: space-between; padding: 10px 10px 0 10px; }
.pane-head h2 { font-weight: 600; font-size: 18.500px; line-height: 30px; white-space: nowrap; }
.pane-head svg { margin-top: 7px; }
.format .pane-head { height: 58px; border-bottom: 1px solid #c8c6c4; }
.fsearch { margin: 16px 9px 0 10px; height: 34px; border: 1px solid #797775; border-radius: 2px; display: flex; align-items: center; padding-left: 9px; padding-top: 1px; font-size: 16px; color: #605e5c; }
.fsearch svg { margin-right: 7px; margin-top: -3px; }
.ftabs { display: flex; height: 67px; padding: 15px 9px 0 15px; font-size: 16px; line-height: 32px; }
.ftabs span { height: 35px; letter-spacing: -.05px; margin-right: 20px; }
.ftabs .on { font-weight: 600; border-bottom: 2px solid #117865; width: 54px; letter-spacing: -.2px; }
.ftabs svg { margin: 15px 0 0 17px; }
.fitem { height: 51px; border-bottom: 1px solid #dedcda; display: flex; align-items: center; padding: 1px 9px 0 13px; font-size: 14.500px; font-weight: 600; letter-spacing: -.2px; }
.fitem span { margin-left: 7px; flex: 1; }
.fitem svg { margin-top: -3px; }
.toggle { width: 40px; height: 20px; border-radius: 10px; background: #117865; color: #fff; font-size: 10.500px; line-height: 20px; display: flex; padding-left: 6px; align-items: center; gap: 4px; }
.toggle i { width: 10px; height: 10px; border-radius: 50%; background: #fff; }
.data { position: relative; }
.dsearch { margin: 0 4px 0 5px; height: 31px; border: 1px solid #d2d0ce; border-bottom-color: #605e5c; border-radius: 4px; background: #fff; display: flex; align-items: center; padding: 1px 0 0 14px; gap: 8px; font-size: 16px; color: #605e5c; }
.fields { margin-top: 9px; height: 690px; overflow: hidden; }
.field { height: 30px; display: flex; align-items: center; padding-left: 33px; font-size: 14.500px; letter-spacing: -.13px; white-space: nowrap; color: #323130; }
.field:first-child { margin-top: -9px; }
.field.sub { padding-left: 52px; }
.twist { width: 22px; flex: none; color: #605e5c; padding-left: 4px; }
.twist svg[width="16"] { margin-left: -3px; }
.box { width: 15px; height: 15px; flex: none; border: 1px solid #8a8886; border-radius: 2px; }
.ico { width: 33px; flex: none; padding-left: 10px; }
.dbar { position: absolute; left: 210px; top: 246px; width: 10px; height: 534px; background: #8a8886; }

/* Status bar */
.status { height: 29px; flex: none; border-bottom: 1px solid #000; display: flex; justify-content: space-between; align-items: center; padding: 1px 21px 0 5px; font-size: 14.200px; color: #3b3a39; letter-spacing: -.03px; }
.zoom { display: flex; align-items: center; color: #605e5c; }
.zoom span { margin-left: 16px; width: 29px; letter-spacing: -.1px; }
.fit { margin-left: 24px; }

/* Taskbar */
.taskbar { height: 60px; flex: none; background: #d6e0ee; display: flex; position: relative; }
.weather { width: 503px; padding-left: 24px; display: flex; gap: 9px; font-size: 14px; line-height: 20px; }
.weather svg { margin-top: 15px; }
.weather div { padding-top: 10px; letter-spacing: -.1px; }
.weather small { font-size: 14px; color: #4c4f54; }
.apps { display: flex; align-items: flex-start; }
.start { margin: 16px 15px 0 0; }
.tsearch { width: 274px; height: 39px; border-radius: 20px; background: #f1f5fb; border: 1px solid #bcc6d8; margin: 11px 17px 0 0; display: flex; align-items: center; padding: 0 17px 0 14px; font-size: 16.500px; color: #555; }
.tsearch span { flex: 1; margin-left: 12px; }
.app { width: 30px; height: 30px; margin: 15px 25px 0 0; position: relative; flex: none; }
.avatar { position: absolute; left: 15px; top: -7px; }
.running::after { content: ""; position: absolute; left: 11px; top: 35px; width: 8px; height: 4px; border-radius: 2px; background: #7b828c; }
.running { margin-right: 16px; }
.current { width: 48px; height: 48px; margin-top: 6px; margin-right: 0; border-radius: 5px; background: #e9eff8; border: 1px solid #f5f8fc; box-shadow: inset -5px 0 0 #e0e8f4; padding: 8px 0 0 12px; }
.current::after { content: ""; position: absolute; left: 13px; top: 43px; width: 20px; height: 4px; border-radius: 2px; background: #0b78d0; }
.tray { margin-left: auto; display: flex; align-items: center; padding-right: 24px; color: #1b1a19; font-size: 14px; line-height: 20px; }
.cloud { margin-left: 22px; }
.lang { width: 32px; text-align: center; margin-left: 22px; letter-spacing: -.1px; }
.globe { margin-left: 21px; } .spk { margin-left: 9px; } .bat { margin-left: 10px; }
.clock { text-align: right; width: 78px; margin-left: 19px; letter-spacing: .38px; white-space: nowrap; }
```
FILE: script.js
```js
const C = "Consumer", R = "Corporate", H = "Home Office", S = "Standard Class", D = "Second Class", U = "United States";
const orders = [
  ["100006", 3, "September", 7, U, "Dennis Kane", C, S, "0.00", "Phones", "110.00"],
  ["100090", 3, "July", 8, U, "Ed Braxton", R, S, "0.20", "Binders", "69.00"],
  ["100090", 3, "July", 8, U, "Ed Braxton", R, S, "0.20", "Tables", "-88.00"],
  ["100293", 1, "March", 14, U, "Neil Französisch", H, S, "0.20", "Paper", "32.00"],
  ["100328", 1, "January", 28, U, "Jasper Cacioppo", C, S, "0.20", "Binders", "1.00"],
  ["100363", 2, "April", 8, U, "Jim Mitchum", "", S, "0.20", "Paper", "7.00"],
  ["100363", 2, "April", 8, U, "Jim Mitchum", R, S, "0.20", "Fasteners", "1.00"],
  ["100391", 2, "May", 25, U, "Barry Weirich", C, S, "0.00", "Paper", "7.00"],
  ["100678", 2, "April", 18, "", "Kunst Miller", C, S, "0.20", "Envelopes", "50.00"],
  ["100678", 2, "April", 18, U, "Kunst Miller", C, S, "0.20", "Accessories", "28.00"],
  ["100678", 2, "April", 18, U, "Kunst Miller", C, S, "0.20", "Art", "1.00"],
  ["100678", 2, "April", 18, U, "Kunst Miller", C, S, "0.30", "Chairs", "-18.00"],
  ["100706", 4, "December", 16, U, "Laurel Elliston", C, D, "0.00", "Accessories", "8.00"],
  ["100706", 4, "December", 16, U, "Laurel Elliston", C, D, "0.00", "Furnishings", "10.00"],
  ["100762", 4, "November", 24, U, "Nat Gilpin", R, S, "0.00", "Art", "46.00"],
  ["100762", 4, "November", 24, U, "Nat Gilpin", R, S, "0.00", "Labels", "96.00"],
  ["100762", 4, "November", 24, U, "Nat Gilpin", R, S, "0.00", "Paper", "77.00"],
  ["100860", 1, "March", 26, U, "Cindy Stewart", C, D, "0.00", "Labels", "9.00"],
  ["100867", 4, "October", 19, U, "Eugene Hildebrand", H, S, "0.20", "Phones", "20.00"],
  ["100881", 1, "March", 28, U, "Daniel Raglin", H, S, "0.20", "Phones", "23.00"],
  ["100895", 2, "June", 2, U, "Stewart Visinsky", C, S, "0.00", "Art", "3.00"],
  ["100895", 2, "June", 2, U, "Stewart Visinsky", C, S, "0.00", "Phones", "67.00"],
  ["100895", 2, "June", 2, U, "Stewart Visinsky", C, S, "0.00", "Storage", "107.00"],
  ["100916", 4, "October", 21, "", "Frank Hawley", R, S, "0.00", "Art", "1.00"],
  ["100916", 4, "October", 21, U, "Frank Hawley", R, S, "0.00", "Storage", "10.00"],
  ["100916", 4, "October", 21, U, "Frank Hawley", R, S, "0.00", "Tables", "112.00"]
];
const numeric = new Set([1, 4, 9, 11]);
document.getElementById("rows").innerHTML = orders.map(([id, q, ...rest]) => {
  const cells = ["CA-2017-" + id, "2017", "Qtr " + q, ...rest];
  return "<tr>" + cells.map((c, i) => `<td${numeric.has(i) ? ' class="n"' : ""}>${c}</td>`).join("") + "</tr>";
}).join("");

const fields = [
  ["Customer Na..."], ["Discount", "sigma"], ["Order Date", "cal", "down"], ["Date Hierar...", "hier", "right", true],
  ["Order ID"], ["Postal Code", "sigma"], ["Product ID"], ["Product Name"], ["Profit"], ["Profit Margin", "calc"],
  ["Quantity", "sigma"], ["Region"], ["Row ID", "sigma"], ["Sales"], ["Segment"], ["Ship Date", "cal", "right"],
  ["Ship Mode"], ["State"], ["Sub-Category"], ["Total Orders", "calc"], ["Total Profit", "calc"],
  ["Total Quantity", "calc"], ["Total Sales", "calc"]
];
const icon = (name, w, h) => name ? `<svg width="${w}" height="${h}"><use href="#i-${name}"/></svg>` : "";
document.getElementById("fields").innerHTML = fields.map(([name, kind, twist, sub]) =>
  `<div class="field${sub ? " sub" : ""}"><span class="twist">${icon(twist, twist === "down" ? 16 : 10, 16)}</span><span class="box"></span><span class="ico">${icon(kind, 16, 18)}</span><span>${name}</span></div>`
).join("");
```
